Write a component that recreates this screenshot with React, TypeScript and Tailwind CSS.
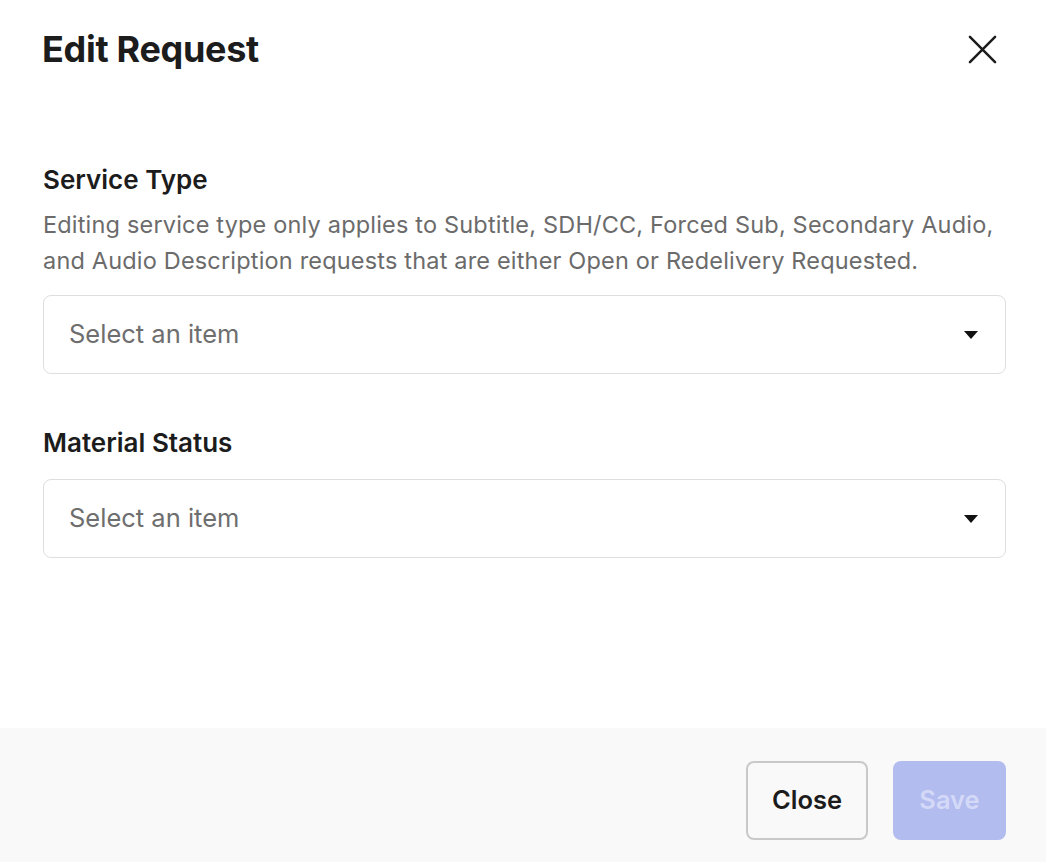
import React from "react";

const Caret = () => (
  <svg width="14" height="8" viewBox="0 0 14 8" className="shrink-0">
    <path d="M0 0 L14 0 L7 8 Z" fill="#111" />
  </svg>
);

const SelectBox = ({ placeholder }: { placeholder: string }) => (
  <div className="flex h-[79px] w-full items-center justify-between rounded-lg border border-[#dedede] bg-white pl-[25px] pr-[27px]">
    <span className="text-[25.5px] text-[#6e6e6e]">{placeholder}</span>
    <Caret />
  </div>
);

export default function App() {
  return (
    <div
      className="flex h-[862px] w-[1046px] flex-col bg-white text-[#1c1c1c]"
      style={{ fontFamily: "Inter, 'Noto Sans', sans-serif" }}
    >
      <div className="flex items-center justify-between pl-[42px] pr-[49px] pt-[28px]">
        <h1 className="text-[36px] font-bold leading-[42px] tracking-[-0.3px]">Edit Request</h1>
        <svg width="29" height="29" viewBox="0 0 30 30">
          <path d="M2 2 L28 28 M28 2 L2 28" stroke="#1c1c1c" strokeWidth="2.6" strokeLinecap="round" />
        </svg>
      </div>

      <div className="flex flex-1 flex-col pl-[43px] pr-[40px] pt-[95px]">
        <label className="text-[26px] font-semibold leading-[30px]">Service Type</label>
        <p className="mt-[12px] whitespace-nowrap text-[23.5px] leading-[36px] tracking-[0.18px] text-[#6b6b6b]">
          Editing service type only applies to Subtitle, SDH/CC, Forced Sub, Secondary Audio,
          <br />
          and Audio Description requests that are either Open or Redelivery Requested.
        </p>
        <div className="mt-[16px]">
          <SelectBox placeholder="Select an item" />
        </div>

        <label className="mt-[54px] text-[26px] font-semibold leading-[30px]">Material Status</label>
        <div className="mt-[21px]">
          <SelectBox placeholder="Select an item" />
        </div>
      </div>

      <div className="flex h-[134px] items-start justify-end gap-[25px] bg-[#f9f9f9] pr-[40px] pt-[33px]">
        <button className="flex h-[79px] w-[122px] items-center justify-center rounded-lg border-2 border-[#c9c9c9] bg-[#f9f9f9] text-[25.5px] font-semibold text-[#1c1c1c]">
          Close
        </button>
        <button className="flex h-[79px] w-[113px] items-center justify-center rounded-lg bg-[#b3bcef] text-[25.5px] font-semibold text-[#d3d9f7]">
          Save
        </button>
      </div>
    </div>
  );
}
